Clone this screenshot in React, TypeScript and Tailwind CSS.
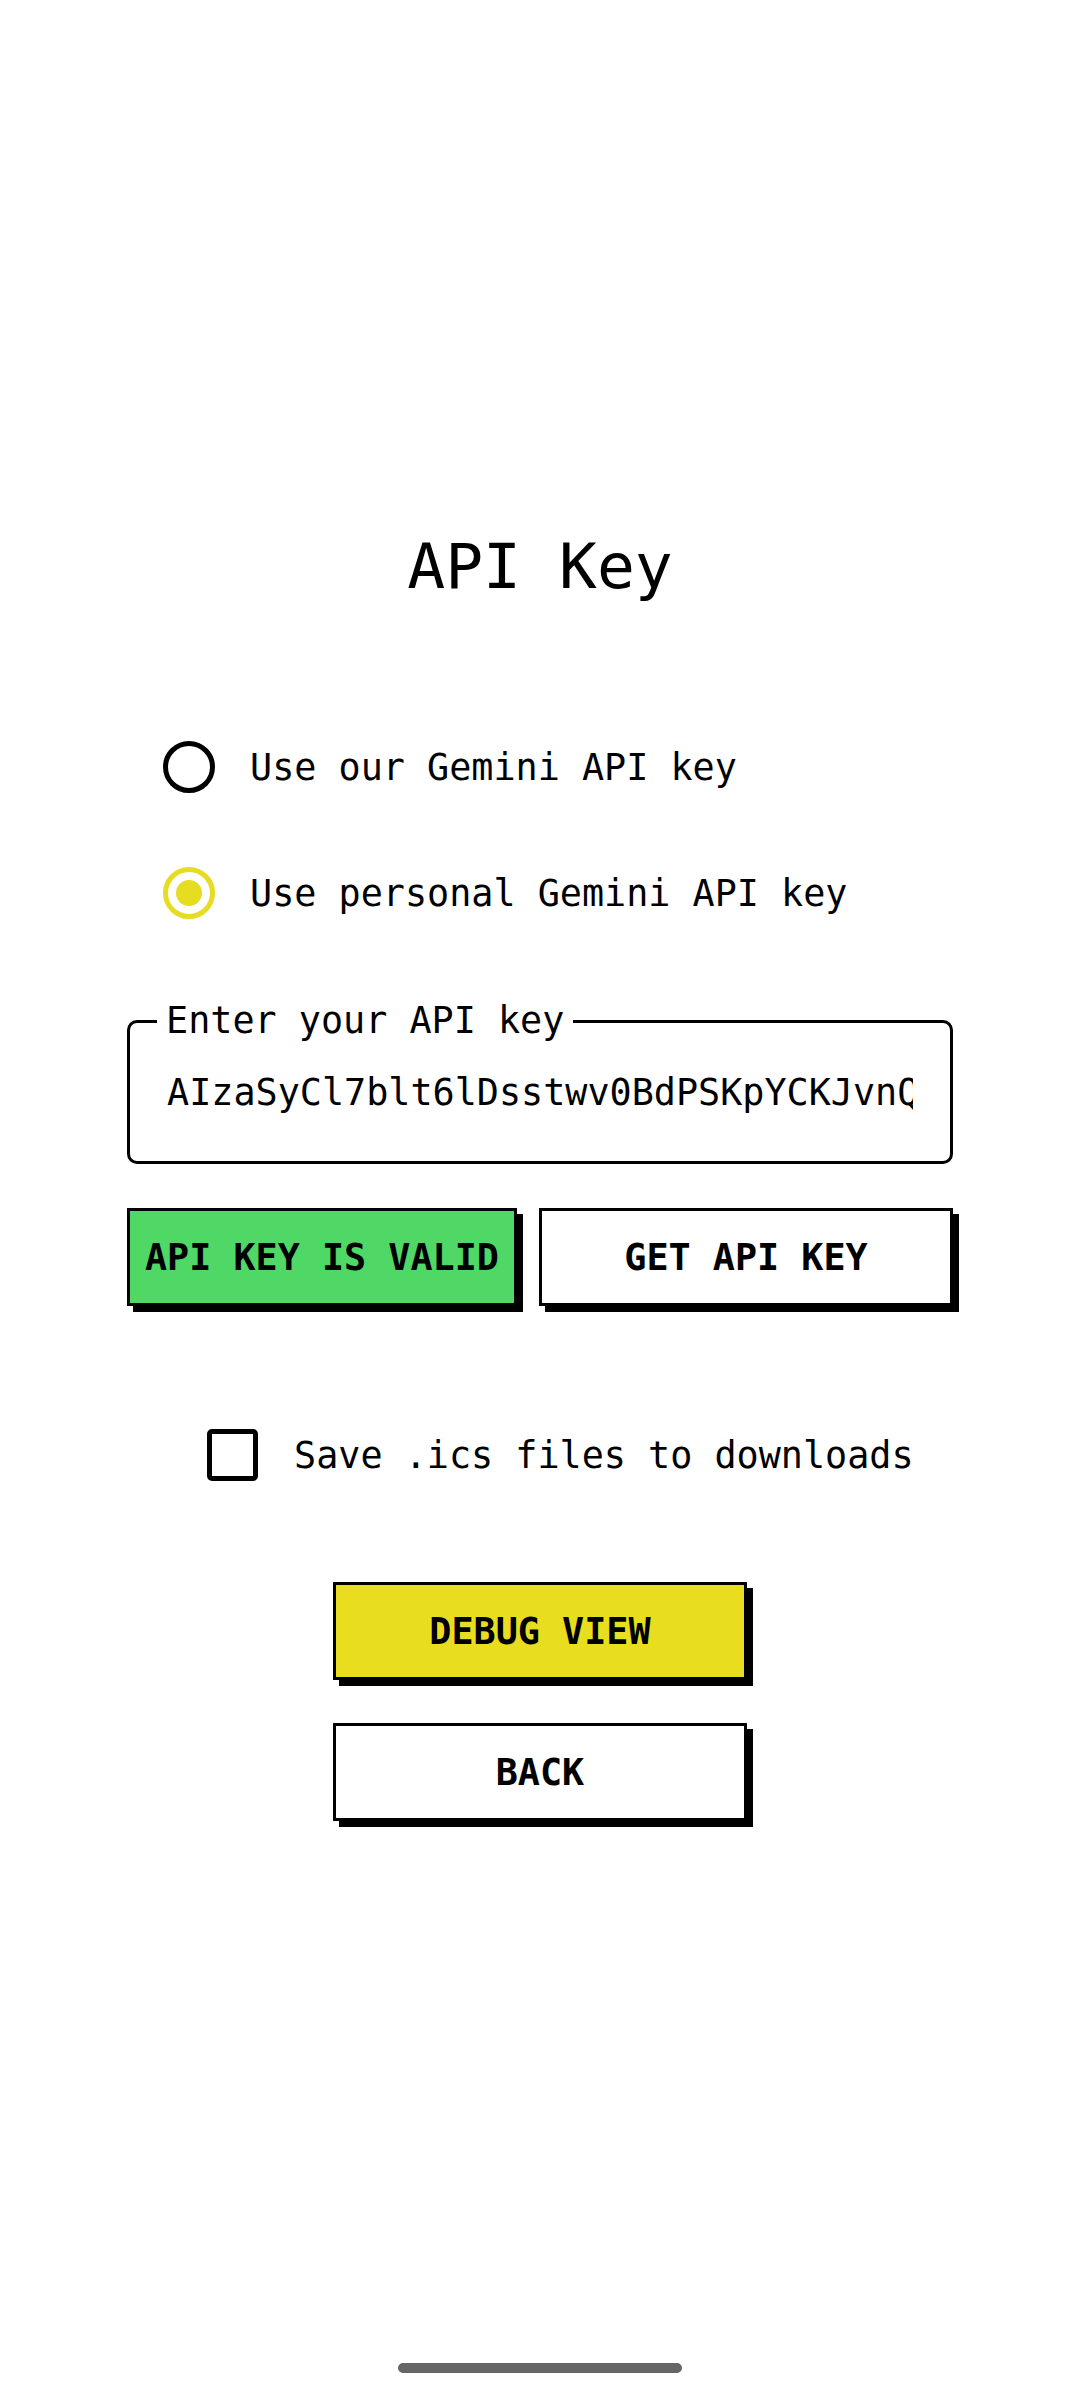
const apiKey = 'AIzaSyCl7blt6lDsstwv0BdPSKpYCKJvnQ'

const Radio = ({ checked }: { checked: boolean }) =>
  checked ? (
    <span className="flex h-[52px] w-[52px] shrink-0 items-center justify-center rounded-full border-[5px] border-[#e6dc22]">
      <span className="h-[26px] w-[26px] rounded-full bg-[#e6dc22]" />
    </span>
  ) : (
    <span className="h-[52px] w-[52px] shrink-0 rounded-full border-[5px] border-black" />
  )

const App = () => {
  return (
    <div className="relative flex h-[2400px] w-[1080px] flex-col bg-white font-['DejaVu_Sans_Mono',monospace] text-[36.75px] text-black">
      <h1 className="mt-[530px] h-[74px] text-center text-[63px] leading-[74px] font-normal">API Key</h1>

      <div className="mt-[137px] ml-[163px] flex flex-col gap-[74px]">
        <label className="flex h-[52px] items-center gap-[35px]">
          <Radio checked={false} />
          <span className="leading-[43px]">Use our Gemini API key</span>
        </label>
        <label className="flex h-[52px] items-center gap-[35px]">
          <Radio checked />
          <span className="leading-[43px]">Use personal Gemini API key</span>
        </label>
      </div>

      <div className="relative mt-[101px] flex h-[144px] w-[826px] items-center self-center rounded-[10px] border-[3px] border-black px-[37px]">
        <span className="absolute top-[-24px] left-[27px] bg-white px-[9px] leading-[43px]">Enter your API key</span>
        <span className="overflow-hidden leading-[43px] whitespace-nowrap">{apiKey}</span>
      </div>

      <div className="mt-[44px] flex h-[98px] w-[826px] gap-[22px] self-center">
        <button className="flex h-full w-[390px] items-center justify-center border-[3px] border-black bg-[#4fd866] leading-[43px] font-bold shadow-[6px_6px_0_#000]">
          API KEY IS VALID
        </button>
        <button className="flex h-full flex-1 items-center justify-center border-[3px] border-black bg-white leading-[43px] font-bold shadow-[6px_6px_0_#000]">
          GET API KEY
        </button>
      </div>

      <label className="mt-[123px] ml-[207px] flex h-[52px] items-center gap-[36px]">
        <span className="h-[52px] w-[51px] shrink-0 rounded-[5px] border-[5px] border-black" />
        <span className="leading-[43px]">Save .ics files to downloads</span>
      </label>

      <button className="mt-[101px] flex h-[98px] w-[414px] items-center justify-center self-center border-[3px] border-black bg-[#e8de1f] leading-[43px] font-bold shadow-[6px_6px_0_#000]">
        DEBUG VIEW
      </button>
      <button className="mt-[43px] flex h-[98px] w-[414px] items-center justify-center self-center border-[3px] border-black bg-white leading-[43px] font-bold shadow-[6px_6px_0_#000]">
        BACK
      </button>

      <div className="absolute top-[2363px] left-[398px] h-[10px] w-[284px] rounded-full bg-[#666]" />
    </div>
  )
}

export default App
